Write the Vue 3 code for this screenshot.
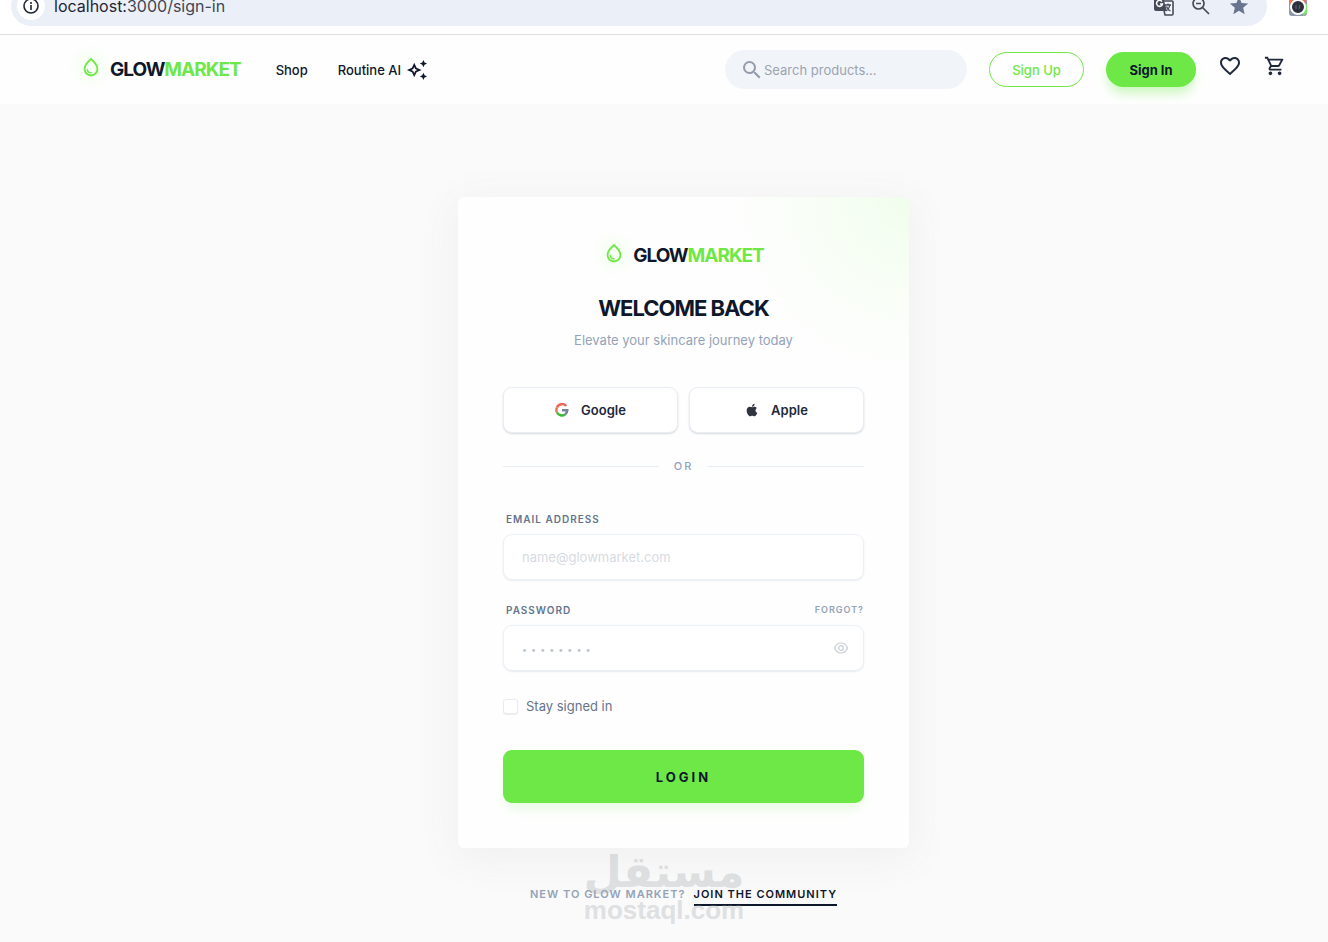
<script setup>
import { ref } from 'vue'

const search = ref('')
const email = ref('')
const password = ref('')
const reveal = ref(false)
const stay = ref(false)
const drop =
  'M12 2c-5.33 4.55-8 8.48-8 11.8 0 4.98 3.8 8.2 8 8.2s8-3.22 8-8.2c0-3.32-2.67-7.25-8-11.8zm0 18c-3.35 0-6-2.57-6-6.2 0-2.34 1.95-5.44 6-9.14 4.05 3.7 6 6.79 6 9.14 0 3.63-2.65 6.2-6 6.2zm-4.17-6c.37 0 .67.26.74.62.41 2.22 2.28 2.98 3.64 2.87.43-.02.79.32.79.75 0 .4-.32.73-.72.75-2.13.13-4.62-1.09-5.19-4.12-.08-.45.28-.87.74-.87z'
</script>

<template>
  <div class="page">
    <div class="chrome">
      <div class="address">
        <span class="info">
          <svg width="18" height="18" viewBox="0 0 18 18" fill="none" stroke="#1f2433" stroke-width="1.600">
            <circle cx="9" cy="9" r="7" />
            <path d="M9 8v5M9 5v2" />
          </svg>
        </span>
        <span class="url"><b>localhost:</b>3000/sign-in</span>
        <span class="tools">
          <svg width="20" height="20" viewBox="0 0 20 20">
            <path d="M8 5h10a1 1 0 0 1 1 1v12a1 1 0 0 1-1 1h-7z" fill="#f3f6fb" stroke="#474b57" stroke-width="1.600" />
            <path d="M1 1h8l4 14H2a2 2 0 0 1-2-2V2a1 1 0 0 1 1-1z" fill="#474b57" />
            <path d="M8 5.600A3 3 0 1 0 8.500 8H6" fill="none" stroke="#fff" stroke-width="1.500" />
            <path d="M11 9h6M14 7.500V9M16 9c-.5 3-2 4.500-4 6M12.500 10.500c.6 2 2 3.500 4 4.500" fill="none" stroke="#474b57" stroke-width="1.300" />
          </svg>
          <svg width="20" height="20" viewBox="0 0 20 20" fill="none" stroke="#474b57" stroke-width="1.700">
            <circle cx="7.500" cy="7.500" r="5.500" />
            <path d="M11.500 11.500 18 18M5 7.500h5" />
          </svg>
          <svg width="22" height="22" viewBox="0 0 24 24" fill="#69758f">
            <path d="M12 17.270 18.180 21l-1.640-7.030L22 9.240l-7.190-.61L12 2 9.190 8.630 2 9.240l5.460 4.730L5.820 21z" />
          </svg>
        </span>
      </div>
      <svg class="extension" width="20" height="20" viewBox="0 0 20 20">
        <rect x="1" y="1" width="18" height="18" rx="3" fill="#8b97ab" />
        <path d="M2 1h16v6H2z" fill="#f0745a" />
        <path d="M15 7h4v9l-4 3z" fill="#78e868" />
        <circle cx="10" cy="10" r="7" fill="#2c303b" stroke="#fff" stroke-width="2" />
        <path d="M8 8v4M12 8l-1 4" stroke="#667" fill="none" />
      </svg>
    </div>

    <header class="header">
      <a class="brand" href="#">
        <svg class="drop" width="22" height="22" viewBox="0 0 24 24"><path :d="drop" fill="currentColor" /></svg>
        <span class="word">GLOW<em>MARKET</em></span>
      </a>
      <nav class="nav">
        <a href="#">Shop</a>
        <a href="#">Routine AI
          <svg width="22" height="22" viewBox="0 0 24 24" fill="currentColor">
            <path d="M19 9l1.250-2.750L23 5l-2.750-1.250L19 1l-1.250 2.750L15 5l2.750 1.250L19 9zm0 6l-1.250 2.750L15 19l2.750 1.250L19 23l1.250-2.750L23 19l-2.750-1.250L19 15zm-7.500-5.500L9 4 6.500 9.500 1 12l5.500 2.500L9 20l2.500-5.500L17 12l-5.500-2.500zm-1.510 3.490L9 15.170l-.99-2.180L5.830 12l2.180-.99L9 8.830l.99 2.180 2.180.99-2.180.99z" />
          </svg>
        </a>
      </nav>
      <label class="search">
        <svg width="24" height="24" viewBox="0 0 24 24" fill="#949cab">
          <path d="M15.500 14h-.79l-.28-.27A6.471 6.471 0 0 0 16 9.500 6.500 6.500 0 1 0 9.500 16c1.610 0 3.090-.59 4.230-1.570l.27.28v.79l5 4.990L20.490 19l-4.990-5zm-6 0C7.010 14 5 11.990 5 9.500S7.010 5 9.500 5 14 7.010 14 9.500 11.990 14 9.500 14z" />
        </svg>
        <input v-model="search" type="text" placeholder="Search products..." aria-label="Search products" />
      </label>
      <button class="pill outline" type="button">Sign Up</button>
      <button class="pill solid" type="button">Sign In</button>
      <button class="icon heart" type="button" aria-label="Favorites">
        <svg width="24" height="24" viewBox="0 0 24 24" fill="currentColor">
          <path d="M16.500 3c-1.740 0-3.410.81-4.500 2.090C10.910 3.810 9.240 3 7.500 3 4.420 3 2 5.420 2 8.500c0 3.780 3.400 6.860 8.550 11.540L12 21.350l1.450-1.320C18.600 15.360 22 12.280 22 8.500 22 5.420 19.580 3 16.500 3zm-4.400 15.550l-.1.1-.1-.1C7.140 14.240 4 11.390 4 8.500 4 6.500 5.500 5 7.500 5c1.540 0 3.040.99 3.570 2.360h1.870C13.460 5.990 14.960 5 16.500 5c2 0 3.500 1.500 3.500 3.500 0 2.890-3.140 5.740-7.900 10.050z" />
        </svg>
      </button>
      <button class="icon cart" type="button" aria-label="Cart">
        <svg width="22" height="22" viewBox="0 0 24 24" fill="currentColor">
          <path d="M15.550 13c.75 0 1.410-.41 1.750-1.030l3.580-6.490A.996.996 0 0 0 20.010 4H5.210l-.94-2H1v2h2l3.600 7.590-1.350 2.440C4.520 15.370 5.480 17 7 17h12v-2H7l1.100-2h7.450zM6.160 6h12.150l-2.760 5H8.530L6.160 6zM7 18c-1.100 0-1.990.9-1.990 2S5.900 22 7 22s2-.9 2-2-.9-2-2-2zm10 0c-1.100 0-1.990.9-1.990 2s.89 2 1.990 2 2-.9 2-2-.9-2-2-2z" />
        </svg>
      </button>
    </header>

    <main class="main">
      <form class="card" @submit.prevent>
        <div class="brand">
          <svg class="drop" width="22" height="22" viewBox="0 0 24 24"><path :d="drop" fill="currentColor" /></svg>
          <span class="word">GLOW<em>MARKET</em></span>
        </div>
        <h1>WELCOME BACK</h1>
        <p class="sub">Elevate your skincare journey today</p>

        <div class="social">
          <button type="button">
            <svg width="14" height="14" viewBox="0 0 14 14" fill="none" stroke-width="2.500">
              <path d="M11.200 3A5.500 5.500 0 0 0 2 4.500" stroke="#ec6653" />
              <path d="M2 4.500a5.500 5.500 0 0 0 0 5" stroke="#ea7560" />
              <path d="M2 9.500A5.500 5.500 0 0 0 10 11.500" stroke="#3fb53a" />
              <path d="M10 11.500A5 5 0 0 0 12.300 7.300H7" stroke="#75839b" />
            </svg>
            Google
          </button>
          <button type="button">
            <svg width="14" height="14" viewBox="2 2 20 20" fill="#30343f">
              <path d="M17.050 20.280c-.98.95-2.050.8-3.080.35-1.090-.46-2.090-.48-3.240 0-1.440.62-2.200.44-3.060-.35C2.790 15.250 3.510 7.590 9.050 7.310c1.350.07 2.290.74 3.080.8 1.180-.24 2.310-.93 3.570-.84 1.510.12 2.650.72 3.400 1.800-3.120 1.870-2.380 5.980.48 7.130-.57 1.500-1.310 2.990-2.540 4.090zM12.030 7.250c-.15-2.230 1.660-4.070 3.740-4.250.29 2.580-2.340 4.500-3.740 4.250z" />
            </svg>
            Apple
          </button>
        </div>

        <div class="or"><span>OR</span></div>

        <div class="row"><label for="email">EMAIL ADDRESS</label></div>
        <div class="field">
          <input id="email" v-model="email" type="email" placeholder="name@glowmarket.com" />
        </div>
        <div class="row">
          <label for="password">PASSWORD</label>
          <a href="#">FORGOT?</a>
        </div>
        <div class="field">
          <input id="password" v-model="password" class="dots" :type="reveal ? 'text' : 'password'" placeholder="••••••••" />
          <button type="button" aria-label="Show password" @click="reveal = !reveal">
            <svg width="16" height="14" viewBox="0 0 16 14" fill="none" stroke="#c9ced8" stroke-width="1.200">
              <path d="M1.500 7C3 3.500 5.300 2 8 2s5 1.500 6.500 5C13 10.500 10.700 12 8 12S3 10.500 1.500 7z" />
              <circle cx="8" cy="7" r="2.300" />
            </svg>
          </button>
        </div>

        <label class="stay"><input v-model="stay" type="checkbox" />Stay signed in</label>
        <button class="login" type="submit">LOGIN</button>
      </form>

      <p class="join">NEW TO GLOW MARKET? <a href="#">JOIN THE COMMUNITY</a></p>
      <div class="watermark">
        <span class="arabic" lang="ar">مستقل</span>
        <span class="latin">mostaql.com</span>
      </div>
    </main>
  </div>
</template>

<style>
body {
  margin: 0;
  background: #fafafa;
}
</style>

<style scoped>
* {
  box-sizing: border-box;
}
.page {
  min-height: 100vh;
  background: #fafafa;
  color: #0f172a;
  font: 500 13px/20px Inter, "Noto Sans", sans-serif;
}
button,
input {
  font: inherit;
  color: inherit;
  margin: 0;
  padding: 0;
}
button {
  border: 0;
  background: none;
}
svg {
  display: block;
  flex: none;
}
a {
  color: inherit;
  text-decoration: none;
}
.chrome {
  display: flex;
  align-items: flex-start;
  height: 35px;
  padding: 0 20px 0 11px;
  overflow: hidden;
  border-bottom: 1px solid #dfdfdf;
  background: #fff;
}
.address {
  display: flex;
  align-items: center;
  flex: 1;
  height: 40px;
  margin-top: -14px;
  padding: 0 17px 0 6px;
  border-radius: 20px;
  background: #ebf0f8;
}
.info {
  display: grid;
  place-items: center;
  width: 28px;
  height: 28px;
  border-radius: 50%;
  background: #fff;
}
.url {
  margin-left: 9px;
  color: #3f4553;
  font-size: 16px;
  font-weight: 400;
}
.url b {
  color: #1f2433;
  font-weight: 400;
}
.tools {
  display: flex;
  align-items: center;
  gap: 17px;
  margin-left: auto;
}
.extension {
  margin: -3px 0 0 21px;
}
.header {
  display: flex;
  align-items: center;
  height: 69px;
  padding: 0 42px 0 80px;
  background: #fefefe;
}
.brand {
  display: flex;
  align-items: center;
  gap: 8px;
}
.drop {
  color: #6ee847;
  margin-bottom: 6px;
  border-radius: 50%;
  background: #f7fff4;
  box-shadow: 0 0 14px 4px #f5fef1;
}
.word {
  font-size: 19px;
  font-weight: 700;
  line-height: 24px;
  letter-spacing: -1px;
}
.word em {
  color: #6ee847;
  font-style: normal;
}
.nav {
  display: flex;
  gap: 30px;
  margin-left: 35px;
}
.nav a {
  display: flex;
  align-items: center;
  gap: 5px;
}
.search {
  display: flex;
  align-items: center;
  width: 242px;
  height: 39px;
  margin-left: auto;
  padding: 0 15px;
  border-radius: 20px;
  background: #f1f5f9;
}
.search input {
  flex: 1;
  min-width: 0;
  border: 0;
  outline: 0;
  background: none;
  font-weight: 400;
}
.search input::placeholder {
  color: #9ca3af;
  opacity: 1;
}
.pill {
  height: 35px;
  border-radius: 18px;
}
.outline {
  width: 95px;
  margin-left: 22px;
  border: 1px solid #6ee847;
  color: #6ee847;
}
.solid {
  width: 90px;
  margin-left: 22px;
  background: #6ee847;
  font-weight: 700;
  box-shadow: 0 8px 12px -2px #c9f6ba;
}
.icon {
  display: grid;
  place-items: center;
  height: 24px;
  margin-bottom: 8px;
  color: #1e293b;
}
.heart {
  margin-left: 22px;
}
.cart {
  margin-left: 22px;
}
.main {
  position: relative;
  display: flex;
  flex-direction: column;
  align-items: center;
  padding: 93px 0 36px 39px;
}
.card {
  width: 451px;
  max-width: 100%;
  padding: 45px;
  border-radius: 6px;
  background: radial-gradient(circle at 100% 0, #f0fdec 0, #f6fef3 60px, #fefefe 180px);
  box-shadow: 0 8px 40px 4px #f0f0f0;
}
.card .brand {
  justify-content: center;
}
h1 {
  margin: 22px 0 0;
  font-size: 22px;
  font-weight: 700;
  line-height: 32px;
  letter-spacing: -1px;
  text-align: center;
}
.sub {
  margin: 6px 0 0;
  color: #94a3b8;
  font-weight: 400;
  text-align: center;
}
.social {
  display: grid;
  grid-template-columns: 1fr 1fr;
  gap: 11px;
  margin-top: 37px;
}
.social button {
  display: flex;
  align-items: center;
  justify-content: center;
  gap: 12px;
  height: 46px;
  border: 1px solid #e9eef5;
  border-radius: 9px;
  background: #fff;
  color: #1e293b;
  font-weight: 600;
  box-shadow: 0 1px 2px #d5d8dd;
}
.or {
  display: flex;
  align-items: center;
  gap: 15px;
  margin: 23px 0;
  color: #94a3b8;
  font-size: 11px;
  letter-spacing: 2px;
}
.or::before,
.or::after {
  content: "";
  flex: 1;
  height: 1px;
  background: #e6edf6;
}
.row {
  display: flex;
  align-items: center;
  justify-content: space-between;
  height: 20px;
  margin-top: 20px;
  padding-left: 3px;
  color: #64748b;
  font-size: 10px;
  font-weight: 600;
  letter-spacing: 1px;
}
.or + .row {
  margin-top: 33px;
}
.row a {
  color: #94a3b8;
  font-size: 9px;
}
.field {
  display: flex;
  align-items: center;
  height: 46px;
  margin-top: 5px;
  padding: 0 14px 0 18px;
  border: 1px solid #ebf0f7;
  border-radius: 9px;
  background: #fff;
  box-shadow: 0 1px 2px #e9ebef;
}
.field input {
  flex: 1;
  min-width: 0;
  border: 0;
  outline: 0;
  background: none;
  font-weight: 400;
}
.field input::placeholder {
  color: #d7dbe2;
  opacity: 1;
}
.field .dots::placeholder {
  color: #bcc3ce;
  font-size: 9px;
  letter-spacing: 4px;
}
.stay {
  display: flex;
  align-items: center;
  gap: 8px;
  margin-top: 25px;
  color: #64748b;
  font-weight: 400;
}
.stay input {
  appearance: none;
  width: 15px;
  height: 15px;
  border: 1px solid #e8eaee;
  border-radius: 3px;
  background: #fff;
  box-shadow: 0 1px 1px #eeeeee;
}
.stay input:checked {
  background: #6ee847;
}
.login {
  width: 100%;
  height: 53px;
  margin-top: 34px;
  border-radius: 9px;
  background: #6ee847;
  font-weight: 700;
  letter-spacing: 3px;
  box-shadow: 0 8px 14px -4px #e1f9d9;
}
.join {
  display: flex;
  gap: 8px;
  margin: 36px 0 0;
  color: #94a3b8;
  font-size: 11px;
  font-weight: 600;
  letter-spacing: 1px;
}
.join a {
  border-bottom: 2px solid #0f172a;
  color: #0f172a;
}
.watermark {
  position: absolute;
  top: 744px;
  left: 50%;
  display: flex;
  flex-direction: column;
  align-items: center;
  width: 160px;
  margin-left: -80px;
  color: #a0a5ac;
  opacity: 0.3;
  pointer-events: none;
}
.arabic {
  font: 700 44px/48px "DejaVu Sans", sans-serif;
}
.latin {
  font: 700 26px/28px "Liberation Sans", sans-serif;
}
</style>
